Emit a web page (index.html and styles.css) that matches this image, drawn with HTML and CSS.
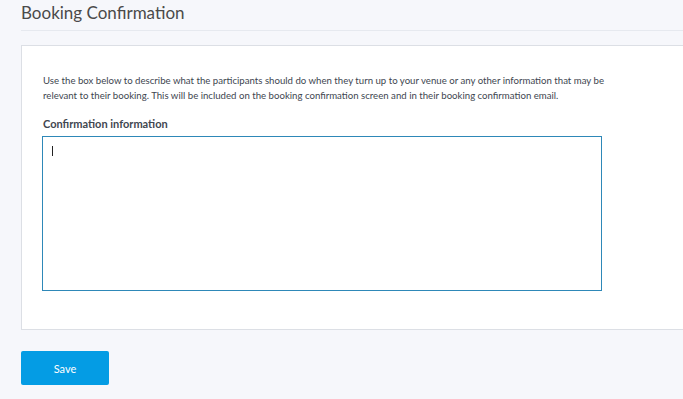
FILE: index.html
```html
<!DOCTYPE html>
<html lang="en">
<head>
    <meta charset="UTF-8">
    <title>Booking Confirmation</title>
    <link rel="stylesheet" href="styles.css">
</head>
<body>
    <div class="page">
        <h1 class="page-title">Booking Confirmation</h1>
        <div class="card">
            <p class="intro">Use the box below to describe what the participants should do when they turn up to your venue or any other information that may be relevant to their booking. This will be included on the booking confirmation screen and in their booking confirmation email.</p>
            <label for="confirmation-info" class="field-label">Confirmation information</label>
            <div class="textarea-box">
                <span class="caret"></span>
            </div>
        </div>
        <button class="save-btn">Save</button>
    </div>
</body>
</html>
```

FILE: styles.css
```css
body {
    margin: 0;
    font-family: Lato, "Open Sans", sans-serif;
    background-color: #f6f7fb;
    color: #444;
}
.page {
    padding: 0 0 0 21px;
}
.page-title {
    margin: 0;
    padding: 1px 0 6px 0;
    font-size: 17px;
    font-weight: 400;
    color: #4a4a4a;
    line-height: 23px;
    border-bottom: 1px solid #e6e9ef;
}
.card {
    margin-top: 14px;
    margin-right: -10px;
    background: #fff;
    border: 1px solid #dcdfe5;
    padding: 27px 0 38px 21px;
}
.intro {
    margin: 0;
    width: 575px;
    font-size: 9.65px;
    line-height: 14.5px;
    color: #3e4650;
}
.field-label {
    display: block;
    margin-top: 15px;
    font-size: 11px;
    line-height: 14px;
    font-weight: 700;
    color: #3f4650;
}
.textarea-box {
    margin-top: 5px;
    margin-left: -1px;
    width: 558px;
    height: 153px;
    border: 1px solid #2e88b8;
    position: relative;
}
.caret {
    position: absolute;
    left: 9px;
    top: 9px;
    width: 1px;
    height: 10px;
    background: #222;
}
.save-btn {
    margin-top: 21px;
    width: 88px;
    height: 34px;
    border: none;
    border-radius: 2px;
    background: #049ce4;
    color: #fff;
    font-family: Lato, sans-serif;
    font-size: 11px;
}
```
